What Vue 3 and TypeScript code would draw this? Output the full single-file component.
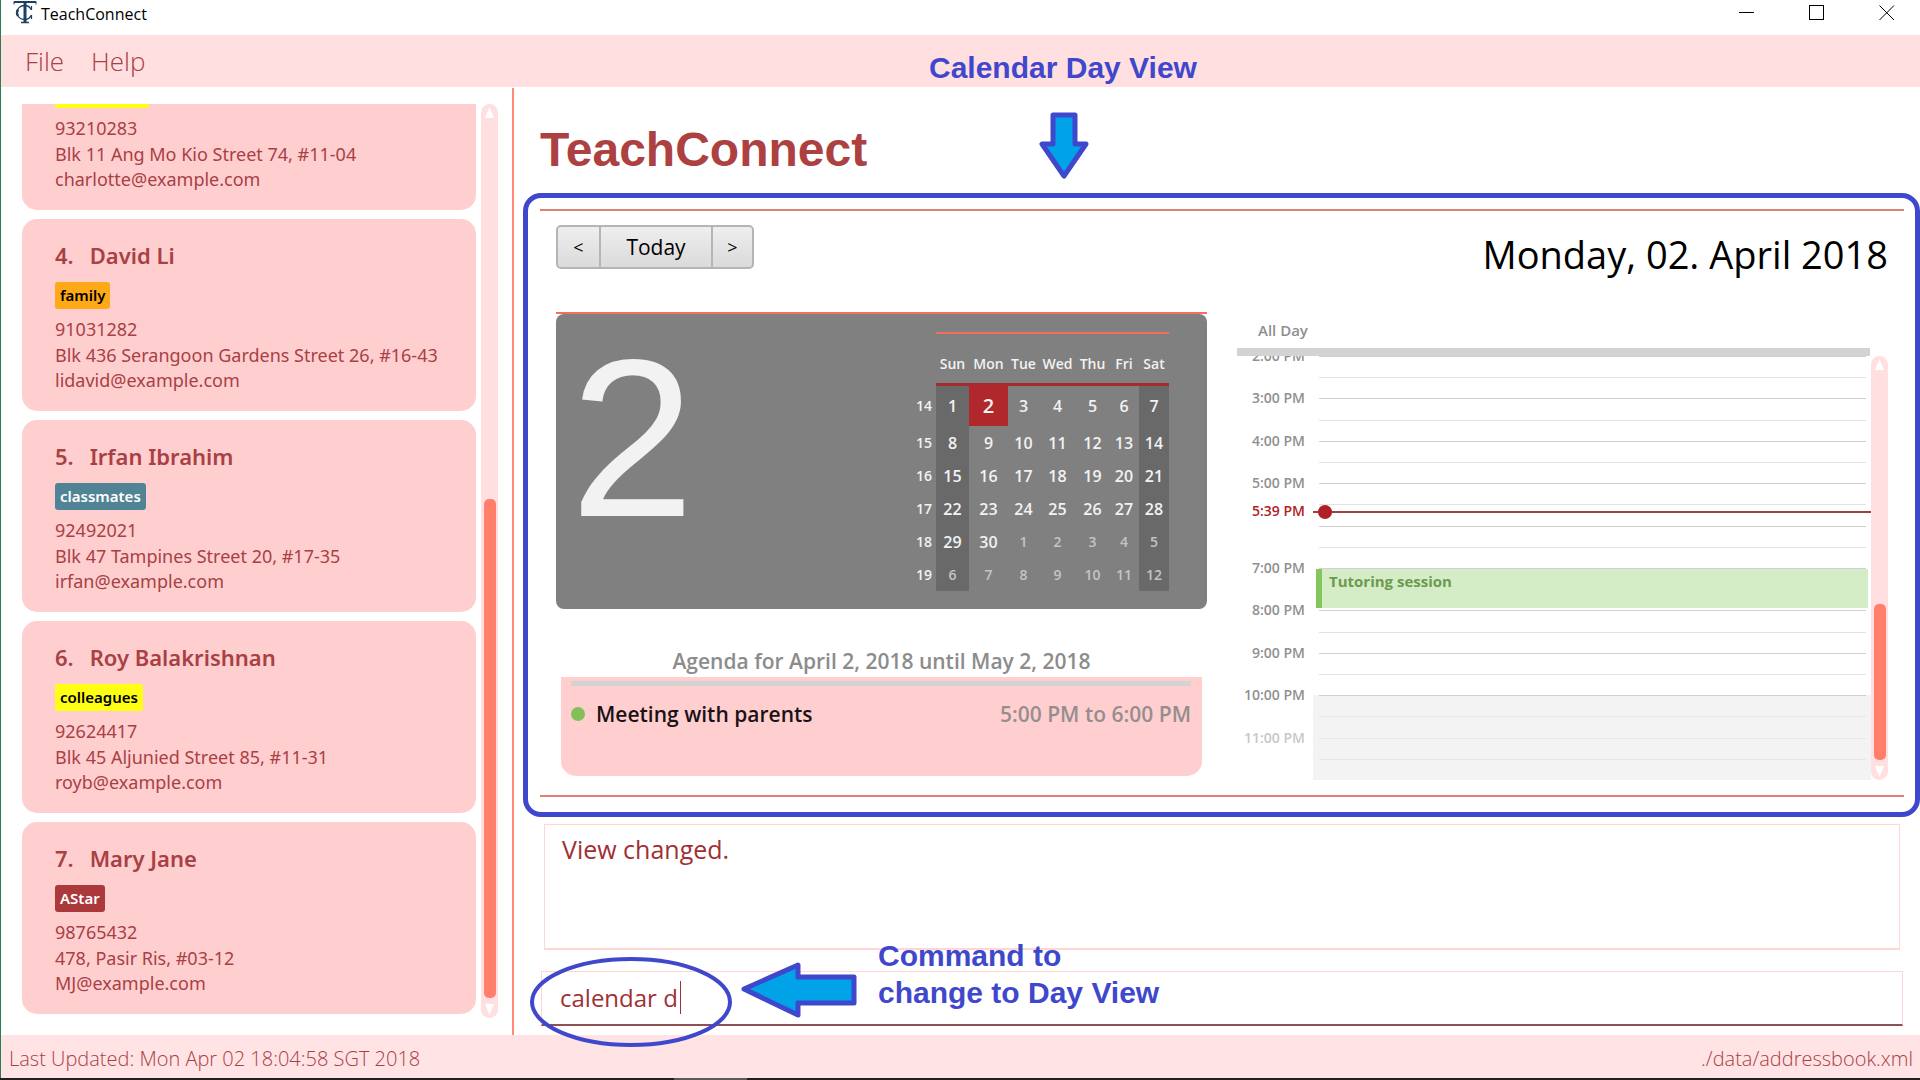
<script setup lang="ts">
import { ref } from 'vue'

interface Person {
  index?: number
  name?: string
  tag: string
  tone: 'yellow' | 'orange' | 'teal' | 'red'
  phone: string
  address: string
  email: string
}

const people: Person[] = [
  { tag: 'neighbours', tone: 'yellow', phone: '93210283', address: 'Blk 11 Ang Mo Kio Street 74, #11-04', email: 'charlotte@example.com' },
  { index: 4, name: 'David Li', tag: 'family', tone: 'orange', phone: '91031282', address: 'Blk 436 Serangoon Gardens Street 26, #16-43', email: 'lidavid@example.com' },
  { index: 5, name: 'Irfan Ibrahim', tag: 'classmates', tone: 'teal', phone: '92492021', address: 'Blk 47 Tampines Street 20, #17-35', email: 'irfan@example.com' },
  { index: 6, name: 'Roy Balakrishnan', tag: 'colleagues', tone: 'yellow', phone: '92624417', address: 'Blk 45 Aljunied Street 85, #11-31', email: 'royb@example.com' },
  { index: 7, name: 'Mary Jane', tag: 'AStar', tone: 'red', phone: '98765432', address: '478, Pasir Ris, #03-12', email: 'MJ@example.com' },
]

const weekdays = ['Sun', 'Mon', 'Tue', 'Wed', 'Thu', 'Fri', 'Sat']

interface Day {
  date: number
  other: boolean
}

// 1 April 2018 is a Sunday, so six weeks run straight on from the 1st
const weeks = Array.from({ length: 6 }, (_, w) => ({
  number: 14 + w,
  days: Array.from({ length: 7 }, (_, d): Day => {
    const n = w * 7 + d + 1
    return { date: n > 30 ? n - 30 : n, other: n > 30 }
  }),
}))

const firstHour = 14
const hourCount = 10
const nowHour = 17 + 39 / 60

const hours = Array.from({ length: hourCount }, (_, i) => {
  const h = firstHour + i
  return {
    label: Math.abs(h - nowHour) < 0.5 ? '' : `${h - 12}:00 PM`,
    off: h >= 22,
    late: h > 22,
  }
})

const offset = (h: number): string => `${((h - firstHour) / hourCount) * 100}%`

const result = ref('View changed.')
const command = ref('calendar d')
</script>

<template>
  <div class="window">
    <header class="titlebar">
      <svg class="logo" viewBox="0 0 24 24" width="24" height="24" fill="none" stroke="#1d4060">
        <path d="M1 4.500V1.500h22v3" stroke-width="1" />
        <path d="M1 2h22" stroke-width="2" />
        <path d="M12 2v20" stroke-width="3" />
        <path d="M8 22.500h8" stroke-width="1.500" />
        <path d="M18 9.500C17 7 14.500 5.500 11.500 5.500C7 5.500 4 8.800 4 12.500S7 19.500 11.500 19.500C14.500 19.500 17 18 18 15.500" stroke-width="1.300" />
        <path d="M5 9.500C3.800 11.500 3.800 14 5 16" stroke-width="2.400" />
        <path d="M18.500 6v4M18.500 15v4" stroke-width="1.200" />
      </svg>
      <span class="app-name">TeachConnect</span>
      <div class="controls">
        <button type="button" aria-label="Minimize">
          <svg width="16" height="16" viewBox="0 0 16 16"><path d="M0 7.500h15" stroke="#000" /></svg>
        </button>
        <button type="button" aria-label="Maximize">
          <svg width="16" height="16" viewBox="0 0 16 16"><rect x="0.500" y="0.500" width="14" height="14" fill="none" stroke="#000" /></svg>
        </button>
        <button type="button" aria-label="Close">
          <svg width="16" height="16" viewBox="0 0 16 16"><path d="M0.500 0.500l14.500 14.500M15 0.500L0.500 15" stroke="#000" /></svg>
        </button>
      </div>
    </header>

    <nav class="menubar">
      <button type="button">File</button>
      <button type="button">Help</button>
    </nav>

    <div class="body">
      <aside class="sidebar">
        <div class="people">
          <article v-for="p in people" :key="p.phone" class="card">
            <h2 v-if="p.name"><span>{{ p.index }}.</span><span>{{ p.name }}</span></h2>
            <span class="tag" :class="p.tone">{{ p.tag }}</span>
            <p>{{ p.phone }}</p>
            <p>{{ p.address }}</p>
            <p>{{ p.email }}</p>
          </article>
        </div>
        <div class="scroll people-scroll">
          <svg width="9" height="11" viewBox="0 0 9 11"><path d="M4.500 0L9 11H0z" fill="#fff" /></svg>
          <div class="thumb"></div>
          <svg width="9" height="11" viewBox="0 0 9 11"><path d="M0 0h9L4.500 11z" fill="#fff" /></svg>
        </div>
      </aside>

      <main class="content">
        <h1>TeachConnect</h1>

        <section class="calendar">
          <div class="highlight"></div>
          <div class="toolbar">
            <div class="segments">
              <button type="button" class="step">&lt;</button>
              <button type="button" class="today">Today</button>
              <button type="button" class="step">&gt;</button>
            </div>
            <div class="date">Monday, 02. April 2018</div>
          </div>

          <div class="day-view">
            <div class="overview">
              <div class="month">
                <div class="month-card">
                  <div class="big-day">2</div>
                  <table>
                    <colgroup>
                      <col class="w30" /><col class="w33" /><col class="w39" /><col class="w31" />
                      <col class="w37" /><col class="w33" /><col class="w30" /><col class="w30" />
                    </colgroup>
                    <thead>
                      <tr>
                        <td></td>
                        <th v-for="d in weekdays" :key="d" scope="col">{{ d }}</th>
                      </tr>
                    </thead>
                    <tbody>
                      <tr v-for="w in weeks" :key="w.number">
                        <th scope="row">{{ w.number }}</th>
                        <td
                          v-for="(d, i) in w.days"
                          :key="i"
                          :class="{ other: d.other, weekend: i === 0 || i === 6, selected: d.date === 2 && !d.other }"
                        >{{ d.date }}</td>
                      </tr>
                    </tbody>
                  </table>
                </div>
              </div>
              <h3>Agenda for April 2, 2018 until May 2, 2018</h3>
              <div class="agenda">
                <div class="rule"></div>
                <div class="entry">
                  <span class="dot"></span>
                  <strong>Meeting with parents</strong>
                  <span class="time">5:00 PM to 6:00 PM</span>
                </div>
              </div>
            </div>

            <div class="schedule">
              <div class="all-day">All Day</div>
              <div class="bar"></div>
              <div class="timeline">
                <div class="hours">
                  <div v-for="(h, i) in hours" :key="i" class="hour" :class="{ off: h.off, late: h.late }">
                    <span class="label">{{ h.label }}</span>
                    <div class="slot"><div></div><div></div></div>
                  </div>
                  <div class="event" :style="{ top: offset(19) }">Tutoring session</div>
                  <div class="now" :style="{ top: offset(nowHour) }">
                    <span class="label">5:39 PM</span>
                    <div class="now-line"></div>
                  </div>
                </div>
                <div class="scroll day-scroll">
                  <svg width="9" height="11" viewBox="0 0 9 11"><path d="M4.500 0L9 11H0z" fill="#fff" /></svg>
                  <div class="thumb"></div>
                  <svg width="9" height="11" viewBox="0 0 9 11"><path d="M0 0h9L4.500 11z" fill="#fff" /></svg>
                </div>
              </div>
            </div>
          </div>
        </section>

        <textarea v-model="result" class="result" readonly aria-label="Result"></textarea>

        <div class="command">
          <input v-model="command" type="text" aria-label="Command" />
          <span class="caret"></span>
          <svg class="ring" width="204" height="92" viewBox="0 0 204 92">
            <ellipse cx="102" cy="46" rx="99" ry="43" fill="none" stroke="#3f48cc" stroke-width="4" />
          </svg>
          <svg class="arrow-left" width="116" height="58" viewBox="0 0 116 58">
            <path d="M3 28L57 4v12h56v26H57v12z" fill="#00a2e8" stroke="#3f48cc" stroke-width="5" stroke-linejoin="round" />
          </svg>
          <div class="note command-note">Command to<br />change to Day View</div>
        </div>

        <div class="note view-note">Calendar Day View</div>
        <svg class="arrow-down" width="50" height="68" viewBox="0 0 50 68">
          <path d="M14 3h22v29h11L25 64L3 32h11z" fill="#00a2e8" stroke="#3f48cc" stroke-width="5" stroke-linejoin="round" />
        </svg>
      </main>
    </div>

    <footer class="status">
      <span>Last Updated: Mon Apr 02 18:04:58 SGT 2018</span>
      <span>./data/addressbook.xml</span>
    </footer>
    <div class="taskbar"><div class="running"></div></div>
  </div>
</template>

<style>
body {
  margin: 0;
  background: #fff;
}
</style>

<style scoped>
* {
  box-sizing: border-box;
}

.window {
  display: flex;
  flex-direction: column;
  min-height: 100vh;
  overflow: hidden;
  background: #fff;
  font-family: "Open Sans", "Noto Sans", sans-serif;
  color: #a94044;
}

h1, h2, h3, p {
  margin: 0;
}

button {
  border: 0;
  padding: 0;
  background: none;
  color: inherit;
  font: inherit;
}

/* window chrome */
.titlebar {
  display: flex;
  align-items: flex-start;
  height: 35px;
  padding-left: 12px;
  border-left: 1px solid #2e7d4f;
}

.app-name {
  margin-left: 4px;
  font-size: 16px;
  line-height: 28px;
  color: #000;
}

.controls {
  display: flex;
  gap: 54px;
  margin-left: auto;
  padding: 5px 25px 0 0;
}

.controls button {
  width: 16px;
  height: 16px;
}

.controls svg {
  display: block;
}

.menubar {
  display: flex;
  gap: 27px;
  height: 52px;
  padding-left: 24px;
  border-left: 1px solid #2e7d4f;
  background: #ffdfe0;
  font-size: 26px;
  font-weight: 300;
}

.body {
  display: flex;
  flex: 1;
  padding-top: 1px;
  border-left: 1px solid #2e7d4f;
}

/* people list */
.sidebar {
  display: flex;
  gap: 5px;
  width: 513px;
  padding: 16px 14px 17px 21px;
  border-right: 2px solid #ff8a75;
  font-family: "Noto Sans", "Open Sans", sans-serif;
}

.people {
  display: flex;
  flex: 1;
  flex-direction: column;
  justify-content: flex-end;
  gap: 9px;
  height: 910px;
  overflow: hidden;
}

.card {
  display: flex;
  flex-direction: column;
  align-items: flex-start;
  padding: 21px 33px 17px;
  border-radius: 15px;
  background: #ffcfd0;
}

.card h2 {
  display: flex;
  gap: 16px;
  margin-bottom: 12px;
  font-size: 22px;
  font-weight: 600;
  line-height: 30px;
}

.tag {
  margin-bottom: 7px;
  padding: 0 5px;
  border-radius: 3px;
  font-size: 15px;
  font-weight: 600;
  line-height: 27px;
  color: #000;
}

.yellow { background: #ffff14; }
.orange { background: #ffa916; }
.teal { background: #508394; color: #fff; }
.red { background: #ab383b; color: #fff; }

.card p {
  font-size: 18px;
  line-height: 26px;
}

.card p:last-child {
  line-height: 25px;
  padding-bottom: 1px;
}

.scroll {
  display: flex;
  flex-direction: column;
  align-items: center;
  width: 17px;
  padding: 3px 0;
  border-radius: 9px;
  background: #ffdfe0;
}

.thumb {
  width: 12px;
  margin: auto 0 6px;
  border-radius: 5px;
  background: #ff7f6a;
}

.people-scroll .thumb {
  height: 499px;
}

.day-scroll .thumb {
  height: 156px;
}

/* main pane */
.content {
  position: relative;
  flex: 1;
  padding: 0 16px 9px 26px;
}

h1 {
  padding-top: 34px;
  font: 700 48px/56px "Liberation Sans", Arial, sans-serif;
  color: #ad4142;
  height: 121px;
}

.calendar {
  position: relative;
  padding: 14px 16px 15px;
  border-top: 2px solid #e08070;
  border-bottom: 2px solid #e08070;
}

.highlight {
  position: absolute;
  inset: -18px -16px -22px -17px;
  border: 5px solid #3f48cc;
  border-radius: 18px;
}

.toolbar {
  display: flex;
  justify-content: space-between;
  align-items: flex-start;
  height: 87px;
}

.segments {
  display: flex;
  height: 44px;
  border: 2px solid #b5b5b5;
  border-radius: 5px;
  background: linear-gradient(#eee, #dadada);
  color: #000;
}

.segments button + button {
  border-left: 2px solid #b5b5b5;
}

.step {
  width: 41px;
  font-size: 18px;
}

.step + .today {
  width: 112px;
  font-size: 21px;
}

.date {
  font-size: 38px;
  line-height: 58px;
  color: #000;
}

.day-view {
  display: grid;
  grid-template-columns: 1fr 1fr;
  gap: 30px;
}

.month {
  border-top: 2px solid #f5705c;
}

.month-card {
  display: flex;
  justify-content: space-between;
  align-items: flex-start;
  height: 295px;
  padding: 18px 38px 0 14px;
  border-radius: 8px;
  background: #808080;
}

.big-day {
  font: 224px/212px "Liberation Sans", Arial, sans-serif;
  color: #f2f2f2;
}

table {
  table-layout: fixed;
  width: 263px;
  border-spacing: 0;
  color: #f2f2f2;
  font-size: 16px;
  font-weight: 600;
}

.w30 { width: 30px; }
.w31 { width: 31px; }
.w33 { width: 33px; }
.w37 { width: 37px; }
.w39 { width: 39px; }

th, td {
  padding: 0;
  text-align: center;
  line-height: 20px;
}

thead th {
  height: 54px;
  padding-top: 10px;
  border-top: 2px solid #f0705f;
  border-bottom: 3px solid #a92a2e;
  font-size: 14px;
  font-weight: 600;
}

tbody tr {
  height: 33px;
}

tbody tr:first-child {
  height: 40px;
}

tbody th {
  padding-right: 4px;
  font-size: 14px;
  font-weight: 600;
  text-align: right;
}

.weekend {
  background: #696969;
}

.other {
  font-size: 14px;
  color: #c4c4c4;
}

.selected {
  background: #b0282c;
  font-size: 20px;
}

h3 {
  margin-top: 36px;
  font-size: 21px;
  font-weight: 600;
  line-height: 32px;
  text-align: center;
  color: #8c8c8c;
}

.agenda {
  height: 99px;
  margin: 0 5px;
  padding: 4px 11px 4px 10px;
  border-radius: 0 0 15px 15px;
  background: #ffcfd0;
}

.rule {
  height: 5px;
  background: #d3d3d3;
}

.entry {
  display: flex;
  align-items: center;
  margin-top: 12px;
  font-size: 21px;
  font-weight: 600;
  line-height: 32px;
}

.dot {
  width: 14px;
  height: 14px;
  margin-right: 11px;
  border-radius: 50%;
  background: #84c05a;
}

.entry strong {
  font-weight: 600;
  color: #1c1214;
}

.time {
  margin-left: auto;
  color: #968e8e;
}

/* day schedule */
.all-day {
  height: 36px;
  padding-left: 21px;
  font-size: 15px;
  font-weight: 600;
  line-height: 36px;
  color: #8f8f8f;
}

.bar {
  height: 8px;
  margin-right: 18px;
  background: #d3d3d3;
}

.timeline {
  display: flex;
  height: 424px;
}

.hours {
  position: relative;
  flex: 1;
  overflow: hidden;
}

.hour {
  display: flex;
  height: 10%;
}

.label {
  width: 76px;
  height: 20px;
  margin-top: -10px;
  padding-right: 8px;
  font-size: 14px;
  font-weight: 600;
  line-height: 20px;
  text-align: right;
  color: #909090;
}

.late .label {
  color: #c8c8c8;
}

.slot {
  display: flex;
  flex: 1;
  flex-direction: column;
  padding: 0 5px 0 6px;
}

.slot div {
  flex: 1;
  border-top: 1px solid #d0d0d0;
}

.slot div + div {
  border-color: #e2e2e2;
}

.off .slot {
  background: #f3f3f3;
}

.late .slot div,
.off .slot div + div {
  border-color: #e6e6e6;
}

.event {
  position: absolute;
  left: 79px;
  right: 3px;
  height: 39px;
  margin-top: 1px;
  padding-left: 7px;
  border-left: 6px solid #84c55c;
  background: #d5edc6;
  font-size: 15px;
  font-weight: 700;
  line-height: 25px;
  color: #6b9a50;
}

.now {
  position: absolute;
  left: 0;
  right: 0;
  display: flex;
}

.now .label {
  color: #b02126;
}

.now-line {
  flex: 1;
  height: 2px;
  background: #a04044;
}

.now-line::before {
  content: "";
  display: block;
  width: 14px;
  height: 14px;
  margin: -6px 0 0 5px;
  border-radius: 50%;
  background: #b02126;
}

/* result and command boxes */
.result {
  display: block;
  width: calc(100% - 8px);
  height: 126px;
  margin: 27px 0 21px 4px;
  padding: 8px 17px;
  border: 1px solid #ffd5d6;
  border-bottom-width: 2px;
  outline: 0;
  resize: none;
  color: #a03034;
  font: 400 25px/32px "Open Sans", "Noto Sans", sans-serif;
}

.command {
  position: relative;
  margin: 0 1px;
}

.command input {
  display: block;
  width: 100%;
  height: 55px;
  padding: 0 18px 2px;
  border: 1px solid #ffd5d6;
  border-bottom: 2px solid #8e5254;
  outline: 0;
  color: #a03034;
  font: 400 24px/32px "Open Sans", "Noto Sans", sans-serif;
}

.caret {
  position: absolute;
  top: 10px;
  left: 139px;
  width: 1px;
  height: 33px;
  background: #a03034;
}

/* annotations */
.ring {
  position: absolute;
  top: -15px;
  left: -12px;
}

.arrow-left {
  position: absolute;
  top: -10px;
  left: 200px;
}

.note {
  position: absolute;
  font: 700 30px/37px "Liberation Sans", Arial, sans-serif;
  white-space: nowrap;
  color: #3f48cc;
}

.command-note {
  top: -34px;
  left: 337px;
}

.view-note {
  top: -39px;
  left: 415px;
}

.arrow-down {
  position: absolute;
  top: 24px;
  left: 525px;
}

/* status bar */
.status {
  display: flex;
  justify-content: space-between;
  height: 43px;
  padding: 0 7px 0 8px;
  border-left: 1px solid #2e7d4f;
  background: #ffe3e5;
  font-size: 20px;
  font-weight: 300;
  line-height: 48px;
}

.taskbar {
  height: 2px;
  background: #231f20;
}

.running {
  width: 73px;
  height: 2px;
  margin-left: 674px;
  background: #5a5a5a;
}
</style>
